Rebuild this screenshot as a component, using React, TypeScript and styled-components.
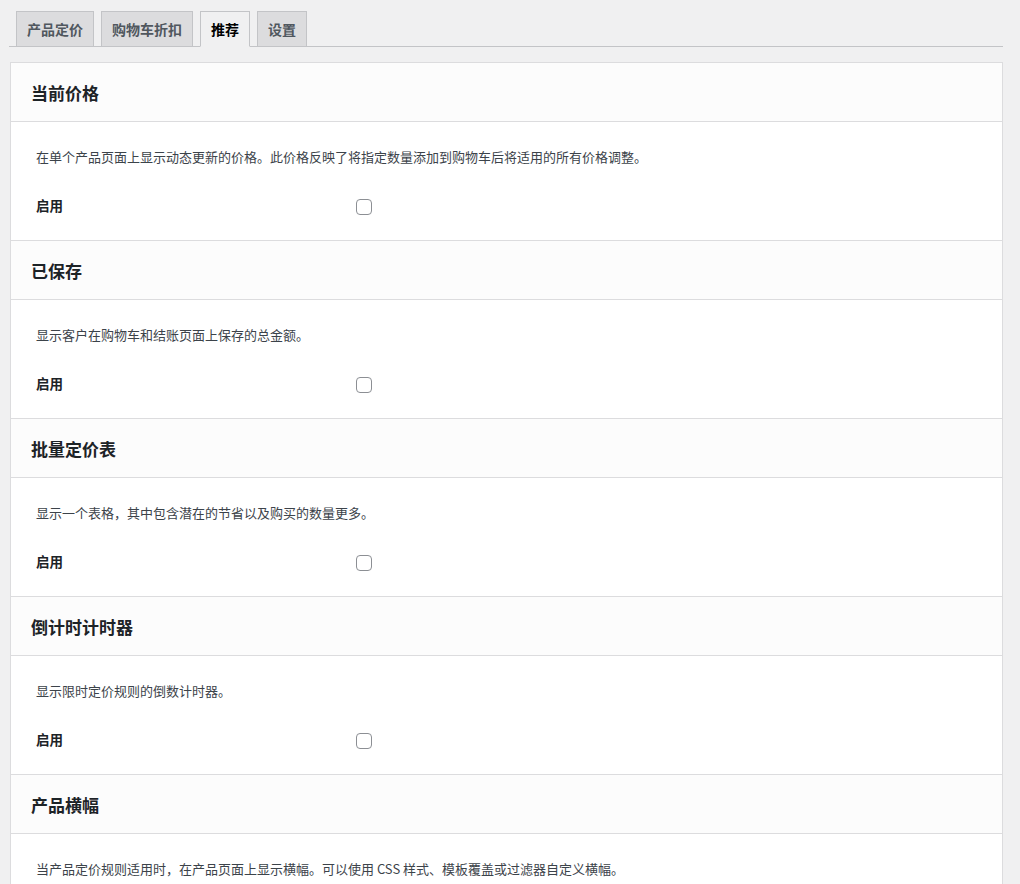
import { createGlobalStyle, styled } from "styled-components";

const GlobalStyle = createGlobalStyle`
  html, body {
    margin: 0;
    padding: 0;
    background: #f0f0f1;
    font-family: "Noto Sans CJK SC", "Noto Sans", sans-serif;
    color: #1d2327;
  }
`;

const Page = styled.div`
  padding: 11px 17px 0 9px;
`;

const TabBar = styled.nav`
  display: flex;
  border-bottom: 1px solid #c3c4c7;
  padding-left: 7px;
  gap: 7px;
`;

const Tab = styled.a<{ $active?: boolean }>`
  display: block;
  font-size: 14px;
  font-weight: 700;
  line-height: 24px;
  padding: 5px 10px;
  margin-bottom: -1px;
  border: 1px solid #c3c4c7;
  background: ${(p) => (p.$active ? "#f0f0f1" : "#dcdcde")};
  border-bottom-color: ${(p) => (p.$active ? "#f0f0f1" : "#c3c4c7")};
  color: ${(p) => (p.$active ? "#000" : "#50575e")};
  cursor: pointer;
`;

const Panel = styled.div`
  margin-top: 15px;
  margin-left: 1px;
  background: #fff;
  border: 1px solid #dcdcde;
  border-bottom: none;
`;

const Section = styled.section`
  border-bottom: 1px solid #dcdcde;
`;

const Header = styled.div`
  height: 58px;
  display: flex;
  align-items: center;
  padding: 0 20px;
  background: #fcfcfc;
  border-bottom: 1px solid #dcdcde;

  h2 {
    margin: 0;
    font-size: 17px;
    font-weight: 700;
    color: #1d2327;
  }
`;

const Body = styled.div`
  height: 118px;
  padding: 25px 25px 0;
  box-sizing: border-box;
`;

const Description = styled.p`
  margin: 0;
  font-size: 13px;
  line-height: 20px;
  color: #3c434a;
`;

const Row = styled.div`
  display: grid;
  grid-template-columns: 320px 1fr;
  align-items: center;
  margin-top: 31px;
`;

const Label = styled.label`
  font-size: 13.5px;
  font-weight: 700;
  color: #1d2327;
  margin-top: -3px;
`;

const Checkbox = styled.input.attrs({ type: "checkbox" })`
  appearance: none;
  width: 16px;
  height: 16px;
  margin: 0;
  border: 1px solid #8c8f94;
  border-radius: 4px;
  background: #fff;
  cursor: pointer;
`;

const tabs = ["产品定价", "购物车折扣", "推荐", "设置"];

const sections = [
  {
    title: "当前价格",
    text: "在单个产品页面上显示动态更新的价格。此价格反映了将指定数量添加到购物车后将适用的所有价格调整。",
  },
  { title: "已保存", text: "显示客户在购物车和结账页面上保存的总金额。" },
  { title: "批量定价表", text: "显示一个表格，其中包含潜在的节省以及购买的数量更多。" },
  { title: "倒计时计时器", text: "显示限时定价规则的倒数计时器。" },
  {
    title: "产品横幅",
    text: "当产品定价规则适用时，在产品页面上显示横幅。可以使用 CSS 样式、模板覆盖或过滤器自定义横幅。",
  },
];

export default function App() {
  return (
    <>
      <GlobalStyle />
      <Page>
        <TabBar>
          {tabs.map((t) => (
            <Tab key={t} $active={t === "推荐"}>
              {t}
            </Tab>
          ))}
        </TabBar>
        <Panel>
          {sections.map((s) => (
            <Section key={s.title}>
              <Header>
                <h2>{s.title}</h2>
              </Header>
              <Body>
                <Description>{s.text}</Description>
                <Row>
                  <Label>启用</Label>
                  <Checkbox />
                </Row>
              </Body>
            </Section>
          ))}
        </Panel>
      </Page>
    </>
  );
}
